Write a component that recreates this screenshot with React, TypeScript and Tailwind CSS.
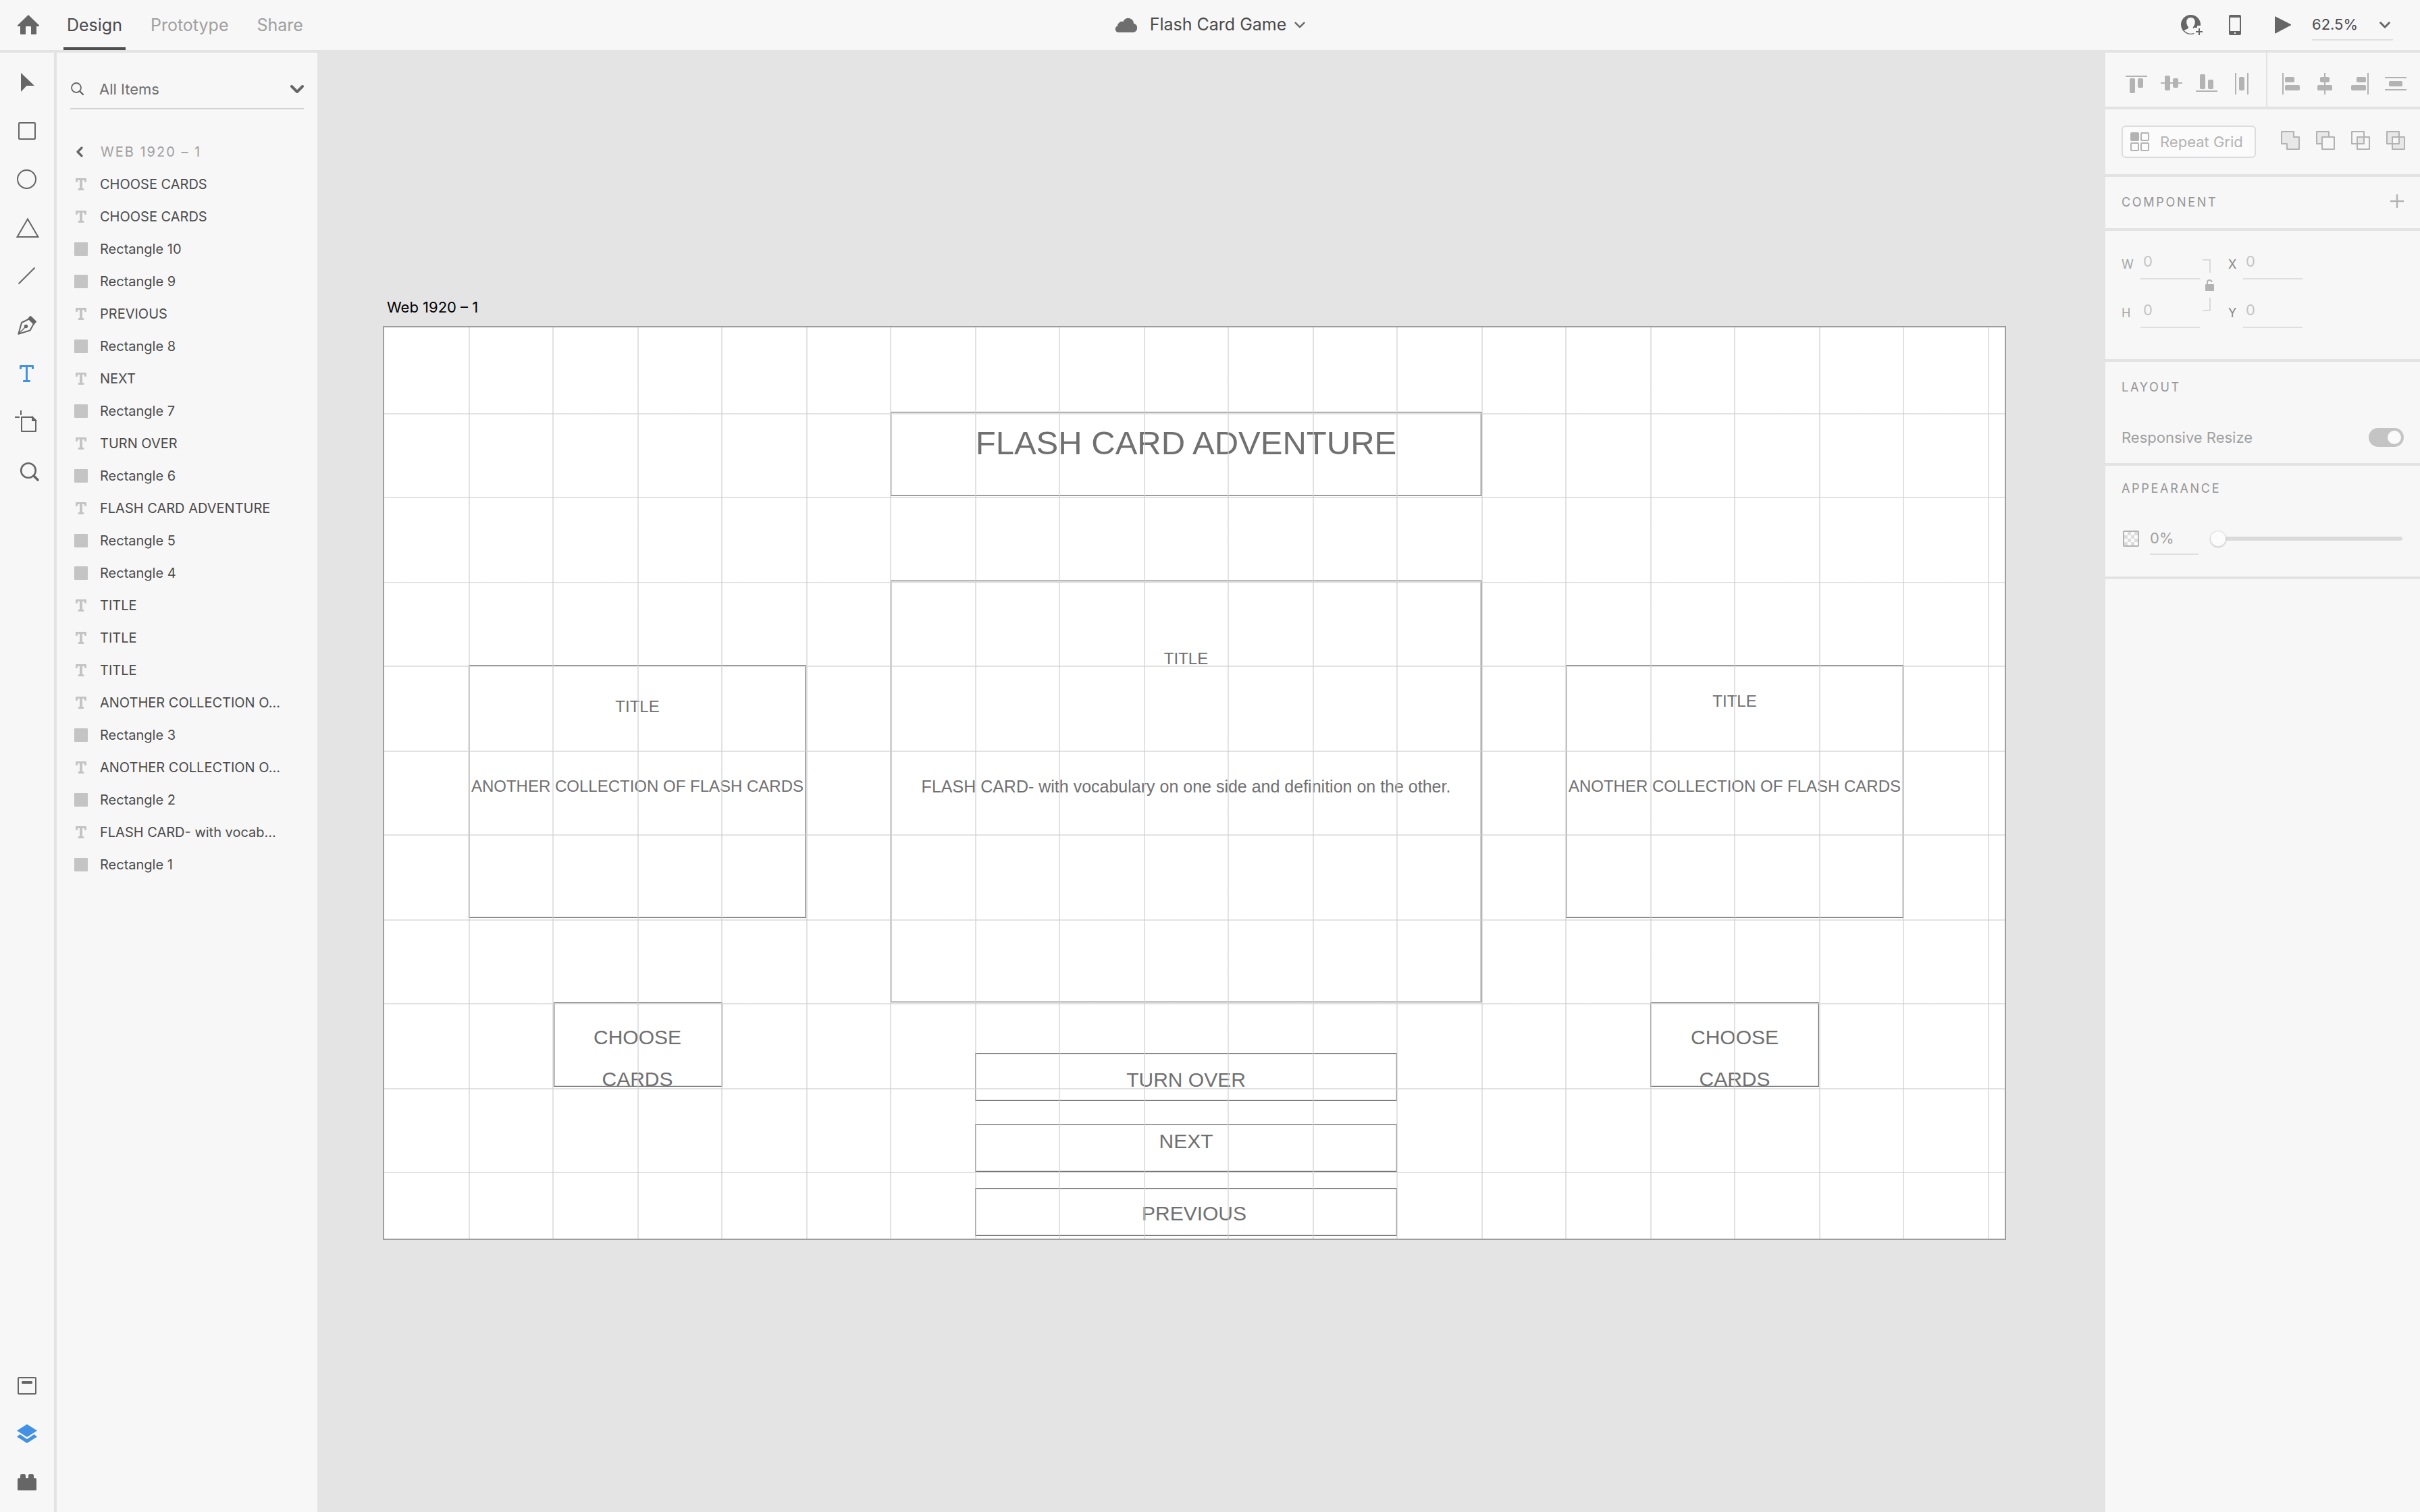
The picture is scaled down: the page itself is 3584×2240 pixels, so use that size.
import React from "react";

const INK = "#666666";
const ACCENT = "#4291e2";
const MUTED = "#b3b3b3";

type Icon = { label: string; art: React.ReactNode };

const tools: Icon[] = [
  { label: "Select", art: <path d="M31 22 51 41H39.5L31 50Z" fill={INK} /> },
  { label: "Rectangle", art: <rect x="28" y="24" width="24" height="24" rx="1" fill="none" stroke={INK} strokeWidth="2" /> },
  { label: "Ellipse", art: <circle cx="39.5" cy="35.5" r="13.5" fill="none" stroke={INK} strokeWidth="2" /> },
  { label: "Polygon", art: <path d="M41 22.5 56.5 49H25.5Z" fill="none" stroke={INK} strokeWidth="2" /> },
  { label: "Line", art: <path d="M27.5 46.5 51.5 22.5" stroke={INK} strokeWidth="2" /> },
  {
    label: "Pen",
    art: (
      <g fill="none" stroke={INK} strokeWidth="2" strokeLinejoin="round">
        <path d="M43 26.5 32 32 27.3 48.7 44.5 43.5 50 33.5" />
        <path d="M28 48 38 38" strokeWidth="1.5" />
        <circle cx="38.5" cy="37.5" r="2.7" fill={INK} stroke="none" />
        <path d="M45.2 23 53 30.5 50 33.8 42.3 26Z" fill={INK} />
      </g>
    ),
  },
  {
    label: "Text",
    art: (
      <path
        d="M29 24Q29 23 30 23H49Q50 23 50 24V28Q50 29 49 29H48Q47 29 47 28V26H41V45H44Q45 45 45 46V47Q45 48 44 48H35Q34 48 34 47V46Q34 45 35 45H38V26H32V28Q32 29 31 29H30Q29 29 29 28Z"
        fill={ACCENT}
      />
    ),
  },
  {
    label: "Artboard",
    art: (
      <g fill="none" stroke={INK} strokeWidth="2">
        <path d="M31 18V25M22 28H29" />
        <path d="M32 28H48L53 33V49H32Z" strokeLinejoin="round" />
        <path d="M48 28 53 33H48Z" fill={INK} />
      </g>
    ),
  },
  {
    label: "Zoom",
    art: (
      <g fill="none" stroke={INK} strokeLinecap="round">
        <circle cx="42" cy="35" r="10.8" strokeWidth="2.6" />
        <path d="M50 43 56 49" strokeWidth="3.6" />
      </g>
    ),
  },
];

const panels: Icon[] = [
  {
    label: "Libraries",
    art: (
      <g>
        <rect x="27" y="25" width="26" height="24" rx="1" fill="none" stroke={INK} strokeWidth="2" />
        <rect x="32" y="30" width="16" height="4" rx="1.5" fill={INK} />
      </g>
    ),
  },
  { label: "Layers", art: <path d="M40 22 55 31.5 40 41 25 31.5ZM29.5 37 40 44 50.5 37 55 40.5 40 50 25 40.5Z" fill={ACCENT} /> },
  {
    label: "Plugins",
    art: (
      <g fill={INK}>
        <rect x="26" y="30" width="28" height="18" rx="1.5" />
        <rect x="30" y="24" width="8" height="10" rx="2" />
        <rect x="42" y="24" width="8" height="10" rx="2" />
      </g>
    ),
  },
];

const verticalAligns: Icon[] = [
  { label: "Align top", art: <><rect x="10" y="34" width="32" height="2" /><rect x="16" y="38" width="8" height="22" rx="2" /><rect x="28" y="38" width="8" height="14" rx="2" /></> },
  { label: "Align middle", art: <><rect x="10" y="44" width="32" height="2" /><rect x="16" y="34" width="8" height="22" rx="2" /><rect x="28" y="38" width="8" height="14" rx="2" /></> },
  { label: "Align bottom", art: <><rect x="16" y="32" width="8" height="22" rx="2" /><rect x="28" y="40" width="8" height="14" rx="2" /><rect x="10" y="56" width="32" height="2" /></> },
  { label: "Distribute horizontally", art: <><rect x="16" y="30" width="2" height="32" /><rect x="34" y="30" width="2" height="32" /><rect x="22" y="36" width="8" height="20" rx="2" /></> },
];

const horizontalAligns: Icon[] = [
  { label: "Align left", art: <><rect x="14" y="30" width="2" height="32" /><rect x="18" y="36" width="14" height="8" rx="2" /><rect x="18" y="48" width="22" height="8" rx="2" /></> },
  { label: "Align center", art: <><rect x="24" y="30" width="2" height="32" /><rect x="18" y="36" width="14" height="8" rx="2" /><rect x="14" y="48" width="22" height="8" rx="2" /></> },
  { label: "Align right", art: <><rect x="36" y="30" width="2" height="32" /><rect x="20" y="36" width="14" height="8" rx="2" /><rect x="12" y="48" width="22" height="8" rx="2" /></> },
  { label: "Distribute vertically", art: <><rect x="10" y="36" width="32" height="2" /><rect x="10" y="54" width="32" height="2" /><rect x="16" y="42" width="20" height="8" rx="2" /></> },
];

const booleans: Icon[] = [
  { label: "Add", art: <path d="M13 33H31V41H39V59H21V51H13Z" fill="#e8e8e8" /> },
  { label: "Subtract", art: <><path d="M31 41V33H13V51H21V41Z" fill="#e8e8e8" /><rect x="21" y="41" width="18" height="18" fill="none" /></> },
  { label: "Intersect", art: <><rect x="13" y="33" width="18" height="18" fill="none" /><rect x="21" y="41" width="18" height="18" fill="none" /><rect x="21" y="41" width="10" height="10" fill="#e8e8e8" /></> },
  { label: "Exclude overlap", art: <><rect x="13" y="33" width="18" height="18" fill="#e8e8e8" /><rect x="21" y="41" width="18" height="18" fill="#e8e8e8" /><rect x="21" y="41" width="10" height="10" fill="#f7f7f7" /><path d="M21 51V41H31" fill="none" /></> },
];

const layers = [
  "CHOOSE CARDS", "CHOOSE CARDS", "Rectangle 10", "Rectangle 9", "PREVIOUS", "Rectangle 8", "NEXT",
  "Rectangle 7", "TURN OVER", "Rectangle 6", "FLASH CARD ADVENTURE", "Rectangle 5", "Rectangle 4",
  "TITLE", "TITLE", "TITLE", "ANOTHER COLLECTION O...", "Rectangle 3", "ANOTHER COLLECTION O...",
  "Rectangle 2", "FLASH CARD- with vocab...", "Rectangle 1",
];

const shapes = [
  "left-[750px] top-[125px] w-[875px] h-[125px]",
  "left-[750px] top-[375px] w-[875px] h-[625px]",
  "left-[125px] top-[500px] w-[500px] h-[375px]",
  "left-[1750px] top-[500px] w-[500px] h-[375px]",
  "left-[251px] top-[1000px] w-[250px] h-[125px]",
  "left-[1875px] top-[1000px] w-[250px] h-[125px]",
  "left-[875px] top-[1075px] w-[625px] h-[71px]",
  "left-[875px] top-[1180px] w-[625px] h-[71px]",
  "left-[875px] top-[1275px] w-[625px] h-[71px]",
];

const heading = "text-[49px] leading-[60px]";
const body = "text-[25px] leading-[30px]";
const caps = "text-[24px] leading-[30px]";
const action = "text-[30px] leading-[62px]";

const texts = [
  { text: "FLASH CARD ADVENTURE", type: heading, at: "left-[750px] top-[141px] w-[875px]" },
  { text: "TITLE", type: caps, at: "left-[750px] top-[476px] w-[875px]" },
  { text: "FLASH CARD- with vocabulary on one side and definition on the other.", type: body, at: "left-[750px] top-[665px] w-[875px]" },
  { text: "TITLE", type: caps, at: "left-[125px] top-[547px] w-[500px]" },
  { text: "ANOTHER COLLECTION OF FLASH CARDS", type: caps, at: "left-[125px] top-[665px] w-[500px]" },
  { text: "TITLE", type: caps, at: "left-[1750px] top-[539px] w-[500px]" },
  { text: "ANOTHER COLLECTION OF FLASH CARDS", type: caps, at: "left-[1750px] top-[665px] w-[500px]" },
  { text: "CHOOSE\nCARDS", type: action, at: "left-[250px] top-[1021px] w-[250px]" },
  { text: "CHOOSE\nCARDS", type: action, at: "left-[1875px] top-[1021px] w-[250px]" },
  { text: "TURN OVER", type: action, at: "left-[875px] top-[1084px] w-[625px]" },
  { text: "NEXT", type: action, at: "left-[875px] top-[1175px] w-[625px]" },
  { text: "PREVIOUS", type: action, at: "left-[887px] top-[1282px] w-[625px]" },
];

function Chevron({ className, color = INK, weight = 3 }: { className: string; color?: string; weight?: number }) {
  return (
    <svg viewBox="0 0 20 12" className={className} fill="none" stroke={color} strokeWidth={weight} strokeLinecap="round" strokeLinejoin="round" aria-hidden="true">
      <path d="M2 2 10 10 18 2" />
    </svg>
  );
}

function RailButton({ icon }: { icon: Icon }) {
  return (
    <button type="button" aria-label={icon.label} className="block h-18 w-20">
      <svg viewBox="0 0 80 72" className="h-18 w-20">{icon.art}</svg>
    </button>
  );
}

function AlignButton({ icon }: { icon: Icon }) {
  return (
    <button type="button" aria-label={icon.label} className="h-20 w-13">
      <svg viewBox="0 0 52 80" className="h-20 w-13" fill={MUTED}>{icon.art}</svg>
    </button>
  );
}

function TopBar() {
  return (
    <header className="grid h-[78px] grid-cols-[1fr_auto_1fr] border-b-4 border-[#e3e3e3] bg-[#f7f7f7]">
      <div className="flex">
        <button type="button" aria-label="Home" className="flex w-[94px] items-center pl-[26px]">
          <svg viewBox="0 0 32 30" className="h-[30px] w-8">
            <path d="M16 0 32 15.5V17H28V28Q28 29 27 29H20V18Q20 17 19 17H13Q12 17 12 18V29H5Q4 29 4 28V17H0V15.5Z" fill={INK} />
          </svg>
        </button>
        <nav className="flex gap-8 text-[25px] leading-8">
          <a href="#design" className="border-b-4 border-[#4f4f4f] px-[5px] pt-[21px] text-[#4b4b4b]">Design</a>
          <a href="#prototype" className="px-[5px] pt-[21px] text-[#a0a0a0]">Prototype</a>
          <a href="#share" className="px-[5px] pt-[21px] text-[#a0a0a0]">Share</a>
        </nav>
      </div>
      <button type="button" className="flex items-center text-[25px] text-[#4b4b4b]">
        <svg viewBox="0 0 34 22" className="mr-[18px] h-[22px] w-[34px]" aria-hidden="true">
          <path d="M5 22A5 5 0 0 1 4 12.4 7 7 0 0 1 12.5 6 8 8 0 0 1 28 8.7 6.8 6.8 0 0 1 27.5 22Z" fill="#6e6e6e" />
        </svg>
        Flash Card Game
        <Chevron className="ml-3 h-[10px] w-4" />
      </button>
      <div className="flex items-center justify-end pr-10">
        <button type="button" aria-label="Invite" className="mr-[39px]">
          <svg viewBox="0 0 32 30" className="h-[30px] w-8">
            <circle cx="14.5" cy="14.5" r="14.5" fill={INK} />
            <path d="M14.5 4C18.6 4 20.8 6.8 20.8 10.8 20.8 14.5 19.3 16.3 18 18 17.4 19.8 18.8 20.8 23 22L24 25Q20 27.8 14.5 27.8T4.5 23C8.5 21.4 11.5 20.3 11 18 9.6 16.3 8.2 14.5 8.2 10.8 8.2 6.8 10.4 4 14.5 4Z" fill="#f7f7f7" />
            <path d="M19 24.5V19H24V16H32V30H20Z" fill="#f7f7f7" />
            <path d="M27 20V30M22 25H32" stroke={INK} strokeWidth="2" />
          </svg>
        </button>
        <button type="button" aria-label="Mobile preview" className="mr-[50px]">
          <svg viewBox="0 0 18 30" className="h-[30px] w-[18px]">
            <path d="M2 0H16Q18 0 18 2V28Q18 30 16 30H2Q0 30 0 28V2Q0 0 2 0ZM2 4V24H16V4ZM8 26V28H10V26Z" fill={INK} fillRule="evenodd" />
          </svg>
        </button>
        <button type="button" aria-label="Desktop preview" className="mr-[31px]">
          <svg viewBox="0 0 24 26" className="h-[26px] w-6">
            <path d="M0 1Q0 0 1 .4L23.6 12Q24.6 13 23.6 13.6L1 25.4Q0 25.8 0 24.8Z" fill={INK} />
          </svg>
        </button>
        <div className="relative mt-2 h-[46px] w-[120px]">
          <select aria-label="Zoom level" className="h-[42px] w-full appearance-none border-b-2 border-[#dfdfdf] pb-1 text-[22px] leading-8 text-[#4b4b4b]">
            <option>62.5%</option>
          </select>
          <Chevron className="pointer-events-none absolute top-[14px] right-1 h-[10px] w-4" weight={3.6} />
        </div>
      </div>
    </header>
  );
}

function LayerList() {
  return (
    <aside className="w-[386px] shrink-0 bg-[#f7f7f7] px-5 pt-[30px]">
      <div className="flex h-[54px] items-center border-b-2 border-[#d2d2d2] pb-1">
        <svg viewBox="0 0 20 20" className="ml-px h-5 w-5 shrink-0" fill="none" stroke={INK} strokeLinecap="round" aria-hidden="true">
          <circle cx="8" cy="8" r="7" strokeWidth="1.8" />
          <path d="M13 13 18 18" strokeWidth="2.4" />
        </svg>
        <input aria-label="Filter layers" placeholder="All Items" className="ml-[22px] min-w-0 flex-1 text-[22px] leading-8 outline-none placeholder:text-[#6e6e6e]" />
        <button type="button" aria-label="Filter type">
          <Chevron className="h-3 w-5" weight={4} />
        </button>
      </div>
      <button type="button" className="mt-[39px] flex h-12 items-center text-xl tracking-widest text-[#a0a0a0]">
        <svg viewBox="0 0 10 16" className="mr-[26px] ml-[9px] h-4 w-[10px]" fill="none" stroke={INK} strokeWidth="3.2" strokeLinecap="round" strokeLinejoin="round" aria-hidden="true">
          <path d="M8 2 2 8 8 14" />
        </svg>
        WEB 1920 – 1
      </button>
      <ul>
        {layers.map((name, i) => (
          <li key={i}>
            <button type="button" className="flex h-12 w-full items-center text-xl text-[#4b4b4b]">
              <svg viewBox="0 0 20 20" className="mr-[18px] ml-[6px] h-5 w-5" fill="#c4c4c4" aria-hidden="true">
                {name.startsWith("Rectangle") ? (
                  <rect width="20" height="20" rx="1" />
                ) : (
                  <path d="M2 2Q2 1 3 1H17Q18 1 18 2V6Q18 7 17 7H16Q15 7 15 6V4H12V16H13Q14.500 16 14.500 17.500T13 19H7Q5.500 19 5.500 17.500T7 16H8V4H5V6Q5 7 4 7H3Q2 7 2 6Z" />
                )}
              </svg>
              {name}
            </button>
          </li>
        ))}
      </ul>
    </aside>
  );
}

function Canvas() {
  return (
    <main className="relative min-w-0 flex-1 overflow-hidden bg-[#e4e4e4]">
      <div className="absolute top-[363px] left-[103px] text-[22px] leading-7 text-black">Web 1920 – 1</div>
      <section className="absolute top-[405px] left-[97px] h-[1354px] w-[2404px] border-2 border-[#9e9e9e] bg-white font-['Liberation_Sans',Arial,sans-serif] text-[#707070]">
        {shapes.map((box) => (
          <div key={box} className={`absolute border border-[#707070] shadow-[inset_0_0_0_1px_#dadada] ${box}`} />
        ))}
        {texts.map((t, i) => (
          <p key={i} className={`absolute flex justify-center text-center whitespace-pre ${t.type} ${t.at}`}>{t.text}</p>
        ))}
        <div className="pointer-events-none absolute inset-y-0 right-0 left-[125px] bg-[linear-gradient(to_right,#cfcfcf99_2px,transparent_2px,transparent_124px,#cfcfcf99_124px,#cfcfcf99_126px,transparent_126px)] bg-size-[250px_100%]" />
        <div className="pointer-events-none absolute inset-x-0 top-[127px] bottom-0 bg-[linear-gradient(to_bottom,#cfcfcf99_2px,transparent_2px,transparent_124px,#cfcfcf99_124px,#cfcfcf99_126px,transparent_126px)] bg-size-[100%_250px]" />
      </section>
    </main>
  );
}

function Field({ id, label, gap, tone }: { id: string; label: string; gap: string; tone: string }) {
  return (
    <div className="flex">
      <label htmlFor={id} className={`pt-[14px] text-lg leading-6 ${gap} ${tone}`}>{label}</label>
      <input id={id} defaultValue="0" className="h-12 w-[88px] border-b-2 border-[#dfdfdf] pb-1 pl-1 text-[22px] text-[#c4c4c4] outline-none" />
    </div>
  );
}

function Inspector() {
  const section = "border-b-4 border-[#e3e3e3]";
  const title = "text-lg leading-6 tracking-[0.15em] text-[#959595]";
  return (
    <aside className="w-[466px] shrink-0 bg-[#f7f7f7]">
      <div className={`flex h-[84px] ${section}`}>
        <div className="flex w-60 border-r-2 border-[#e3e3e3] pl-5">
          {verticalAligns.map((icon) => <AlignButton key={icon.label} icon={icon} />)}
        </div>
        <div className="flex pl-2">
          {horizontalAligns.map((icon) => <AlignButton key={icon.label} icon={icon} />)}
        </div>
      </div>
      <div className={`flex h-[100px] items-center pl-6 ${section}`}>
        <button type="button" className="mr-[25px] flex h-12 w-[199px] items-center rounded-md border-2 border-[#dcdcdc] bg-[#fbfbfb] pl-[11px] text-[22px] whitespace-nowrap text-[#b3b3b3]">
          <svg viewBox="0 0 28 28" className="mr-4 h-7 w-7 shrink-0" fill="none" stroke={MUTED} strokeWidth="2" aria-hidden="true">
            <rect x="1" y="1" width="11" height="11" rx="1" fill={MUTED} />
            <rect x="16" y="1" width="11" height="11" rx="1" />
            <rect x="1" y="16" width="11" height="11" rx="1" />
            <rect x="16" y="16" width="11" height="11" rx="1" />
          </svg>
          Repeat Grid
        </button>
        {booleans.map((icon) => (
          <button key={icon.label} type="button" aria-label={icon.label}>
            <svg viewBox="0 0 52 96" className="h-24 w-13" stroke={MUTED} strokeWidth="2" strokeLinejoin="round">{icon.art}</svg>
          </button>
        ))}
      </div>
      <div className={`flex h-20 items-center justify-between pr-6 pl-6 ${section}`}>
        <h2 className={title}>COMPONENT</h2>
        <button type="button" aria-label="Add component" className="pb-1">
          <svg viewBox="0 0 20 20" className="h-5 w-5"><path d="M10 0V20M0 10H20" stroke={MUTED} strokeWidth="2.4" /></svg>
        </button>
      </div>
      <div className={`flex h-[194px] pt-6 pl-6 ${section}`}>
        <div className="flex flex-col gap-6">
          <Field id="width" label="W" gap="w-7" tone="text-[#a5a5a5]" />
          <Field id="height" label="H" gap="w-7" tone="text-[#a5a5a5]" />
        </div>
        <button type="button" aria-label="Lock aspect ratio" className="mt-[18px] mr-5 ml-1 h-20 w-[18px]">
          <svg viewBox="0 0 18 80" className="h-20 w-[18px]" fill="none" stroke="#dadada" strokeWidth="2">
            <path d="M0 1H11V20M11 57V76H0" />
            <rect x="4" y="37" width="13" height="10" rx="1" fill={MUTED} stroke="none" />
            <path d="M7 38V34Q7 31 10.500 31 13 31 14 34" stroke={MUTED} />
          </svg>
        </button>
        <div className="flex flex-col gap-6">
          <Field id="pos-x" label="X" gap="w-[22px]" tone="text-[#858585]" />
          <Field id="pos-y" label="Y" gap="w-[22px]" tone="text-[#858585]" />
        </div>
      </div>
      <div className={`h-[154px] px-6 pt-[26px] ${section}`}>
        <h2 className={title}>LAYOUT</h2>
        <div className="mt-[46px] flex h-8 items-center justify-between">
          <label htmlFor="responsive" className="text-[22px] leading-8 text-[#a0a0a0]">Responsive Resize</label>
          <div className="relative h-7 w-[52px]">
            <input id="responsive" type="checkbox" role="switch" defaultChecked className="peer block h-7 w-[52px] appearance-none rounded-full bg-[#c4c4c4]" />
            <span className="pointer-events-none absolute top-1 right-1 h-5 w-5 rounded-full bg-[#fafafa]" />
          </div>
        </div>
      </div>
      <div className={`h-[168px] pt-[22px] pr-[26px] pl-6 ${section}`}>
        <h2 className={title}>APPEARANCE</h2>
        <div className="mt-[38px] flex h-12 items-center">
          <svg viewBox="0 0 24 24" className="ml-[2px] h-6 w-6" aria-hidden="true">
            <rect x="1" y="1" width="22" height="22" rx="1" fill="#fbfbfb" stroke={MUTED} strokeWidth="2" />
            <path d="M7 2h5v5H7zM17 2h5v5h-5zM2 7h5v5H2zM12 7h5v5h-5zM7 12h5v5H7zM17 12h5v5h-5zM2 17h5v5H2zM12 17h5v5h-5z" fill="#dcdcdc" />
          </svg>
          <input aria-label="Opacity" defaultValue="0%" className="ml-4 h-12 w-18 border-b-2 border-[#dfdfdf] text-[22px] text-[#a0a0a0] outline-none" />
          <input
            type="range"
            aria-label="Opacity slider"
            defaultValue={0}
            className="ml-[17px] h-[6px] min-w-0 flex-1 appearance-none rounded-full bg-[#dadada] [&::-webkit-slider-thumb]:h-6 [&::-webkit-slider-thumb]:w-6 [&::-webkit-slider-thumb]:appearance-none [&::-webkit-slider-thumb]:rounded-full [&::-webkit-slider-thumb]:border [&::-webkit-slider-thumb]:border-[#dedede] [&::-webkit-slider-thumb]:bg-[#fcfcfc] [&::-webkit-slider-thumb]:shadow-[0_1px_2px_#00000030]"
          />
        </div>
      </div>
    </aside>
  );
}

export default function App() {
  return (
    <div className="flex min-h-screen flex-col bg-[#e4e4e4] font-['Inter','Noto_Sans',sans-serif]">
      <TopBar />
      <div className="flex flex-1">
        <div className="flex w-[84px] shrink-0 flex-col justify-between border-r-4 border-[#e3e3e3] bg-[#f7f7f7] py-2">
          <div>{tools.map((icon) => <RailButton key={icon.label} icon={icon} />)}</div>
          <div>{panels.map((icon) => <RailButton key={icon.label} icon={icon} />)}</div>
        </div>
        <LayerList />
        <Canvas />
        <Inspector />
      </div>
    </div>
  );
}
